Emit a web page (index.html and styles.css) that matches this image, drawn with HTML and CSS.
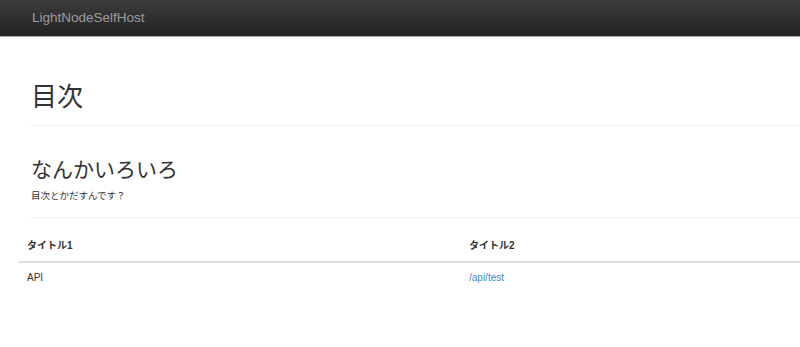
FILE: index.html
```html
<!DOCTYPE html>
<html lang="ja">
<head>
    <meta charset="utf-8">
    <title>LightNodeSelfHost</title>
    <link rel="stylesheet" href="styles.css">
</head>
<body>
    <nav class="navbar">
        <a class="navbar-brand" href="#">LightNodeSelfHost</a>
    </nav>

    <main class="content">
        <div class="page-header">
            <h1>目次</h1>
        </div>

        <section class="intro">
            <h2>なんかいろいろ</h2>
            <p>目次とかだすんです？</p>
        </section>

        <table class="index-table">
            <thead>
                <tr>
                    <th>タイトル1</th>
                    <th>タイトル2</th>
                </tr>
            </thead>
            <tbody>
                <tr>
                    <td>API</td>
                    <td><a href="#">/api/test</a></td>
                </tr>
            </tbody>
        </table>
    </main>
</body>
</html>
```

FILE: styles.css
```css
body {
    margin: 0;
    font-family: "Liberation Sans", "Noto Sans CJK JP", sans-serif;
    font-size: 10px;
    line-height: 14px;
    color: #333;
    background: #fff;
}

a {
    color: #428bca;
    text-decoration: none;
}

/* top bar */
.navbar {
    height: 36px;
    background: linear-gradient(to bottom, #3c3c3c, #222);
    box-shadow: 0 1px 0 #a8a8a8;
    display: flex;
    align-items: center;
    padding-left: 32px;
}

.navbar-brand {
    color: #9d9d9d;
    font-size: 13.5px;
    line-height: 18px;
    margin-top: -1px;
}

/* page content */
.content {
    padding-top: 44px;
}

.page-header {
    margin-left: 31px;
    padding-bottom: 16px;
    border-bottom: 1px solid #eee;
}

.page-header h1 {
    margin: 0;
    font-size: 26px;
    line-height: 29px;
    font-weight: 400;
    font-family: "Noto Sans CJK JP", sans-serif;
}

.intro {
    margin-left: 31px;
    padding-top: 30px;
    padding-bottom: 15px;
    border-bottom: 1px solid #eee;
}

.intro h2 {
    margin: 0;
    font-size: 21px;
    line-height: 24px;
    font-weight: 400;
    font-family: "Noto Sans CJK JP", sans-serif;
}

.intro p {
    margin: 8px 0 0;
    font-size: 9.5px;
    font-family: "Noto Sans CJK JP", sans-serif;
}

.index-table {
    margin: 13px 0 0 19px;
    width: calc(100% - 19px);
    border-collapse: collapse;
}

.index-table th,
.index-table td {
    padding: 8px;
    text-align: left;
    line-height: 14px;
}

.index-table th {
    font-weight: bold;
    border-bottom: 2px solid #ddd;
}

.index-table th:first-child,
.index-table td:first-child {
    width: 426px;
}
```
